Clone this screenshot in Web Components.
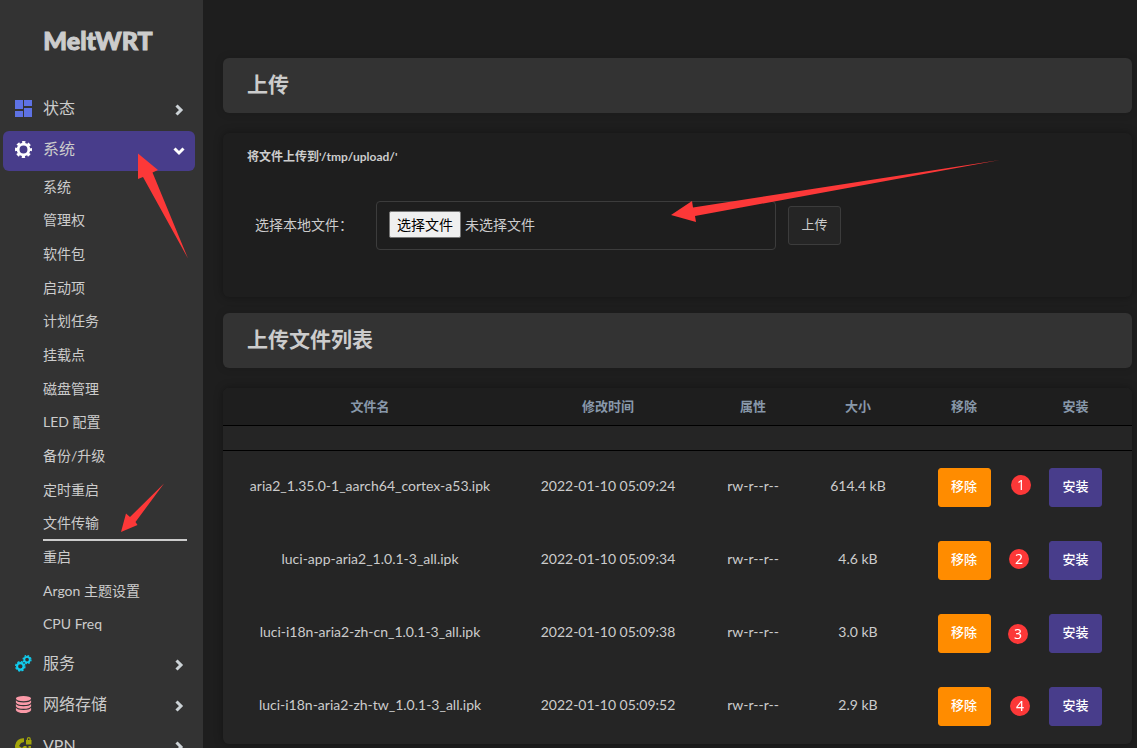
<!DOCTYPE html>
<html lang="zh-CN">
<head>
<meta charset="utf-8">
<title>MeltWRT</title>
<style>
body { margin: 0; background: #1e1e1e; color: #ccc; font: 14px/20px Lato, "Noto Sans CJK SC", sans-serif; }
</style>
</head>
<body>
<wrt-app></wrt-app>
<script>
const define = (name, html, setup) => customElements.define(name, class extends HTMLElement {
  connectedCallback() {
    if (this.shadowRoot) return;
    this.attachShadow({ mode: 'open' }).innerHTML = html;
    if (setup) setup(this, this.shadowRoot);
  }
});

const icons = {
  status: '<svg viewBox="0 0 17 17" fill="#5e72e4"><path d="M0 0h8v9H0zM0 11h8v6H0zM9 0h8v6H9zM9 8h8v9H9z"/></svg>',
  system: '<svg viewBox="0 0 24 24" fill="none" stroke="#fff"><circle cx="12" cy="12" r="7.6" stroke-width="4"/><circle cx="12" cy="12" r="10.4" stroke-width="3.2" stroke-dasharray="4.6 3.568" stroke-dashoffset="2.3"/></svg>',
  service: '<svg viewBox="0 0 24 24" fill="none" stroke="#11cdef"><circle cx="7.5" cy="16" r="4.6" stroke-width="3"/><circle cx="7.5" cy="16" r="6.5" stroke-width="2" stroke-dasharray="3 2.105"/><circle cx="17" cy="6.5" r="3.9" stroke-width="2.6"/><circle cx="17" cy="6.5" r="5.6" stroke-width="1.8" stroke-dasharray="2.4 2"/></svg>',
  storage: '<svg viewBox="0 0 16 17" fill="#fb9aa8"><ellipse cx="8" cy="2.6" rx="7.6" ry="2.6"/><path d="M.4 4.2Q2 6.4 8 6.4t7.6-2.2v2.2Q14 9 8 9T.4 6.400z"/><path d="M.4 8Q2 10.200 8 10.200T15.600 8v2.200Q14 12.800 8 12.800T.4 10.200z"/><path d="M.4 11.800Q2 14 8 14t7.600-2.200v2.400Q14 17 8 17T.4 14.200z"/></svg>',
  vpn: '<svg viewBox="0 0 17 17" fill="#a3a50a"><path d="M9 1.200A8 8 0 1 0 16 9h-2.500v2l-2-.5V9H9L7 11 4 9 6 6l3-1z"/><path d="M11 3h.8V2a2 2 0 0 1 4 0v1h.7v4.500H11zm2 0h1.500V2a.75.75 0 0 0-1.500 0z"/></svg>'
};

define('menu-item', `
<style>
:host { display: block; }
a { display: flex; align-items: center; height: 40px; margin: 0 8px 0 3px; padding: 0 10px 0 12px; border-radius: 6px; color: #ccc; text-decoration: none; font-size: 16px; line-height: 24px; }
:host([open]) a { background: #483d8b; }
.icon { display: flex; width: 18px; margin-right: 10px; padding-bottom: 3px; }
.icon svg { width: 17px; height: 17px; }
.label { flex: 1; padding-bottom: 4px; }
.arrow { width: 12px; height: 12px; fill: none; stroke: #ccd2d6; stroke-width: 3; }
:host([open]) .arrow { transform: rotate(90deg); stroke: #fff; }
</style>
<a href="#"><span class="icon"></span><span class="label"><slot></slot></span><svg class="arrow" viewBox="0 0 12 12"><path d="M3.500 1.500 8 6l-4.500 4.500"/></svg></a>
<slot name="children"></slot>`,
(host, root) => { root.querySelector('.icon').innerHTML = icons[host.getAttribute('icon')]; });

define('sub-menu', `
<style>
:host { display: grid; grid-auto-rows: 1fr; height: 471px; margin: 0 16px 2px 43px; }
</style><slot></slot>`);

define('sub-item', `
<style>
:host { display: flex; }
a { flex: 1; display: flex; align-items: center; box-sizing: border-box; border-bottom: 2px solid transparent; color: #ccc; text-decoration: none; font-size: 14px; line-height: 20px; }
:host([active]) a { border-color: #ccc; }
</style><a href="#"><slot></slot></a>`);

define('side-bar', `
<style>
:host { display: block; box-sizing: border-box; width: 203px; flex: none; background: #333; overflow: hidden; }
.brand { display: flex; justify-content: center; align-items: center; height: 80px; padding: 0 7px 0 0; margin-bottom: 10px; color: #ccc; text-decoration: none; font-size: 25px; line-height: 32px; font-weight: 900; -webkit-text-stroke: 1px #ccc; }
nav { display: grid; gap: 1px; }
</style>
<a class="brand" href="#">MeltWRT</a>
<nav>
<menu-item icon="status">状态</menu-item>
<menu-item icon="system" open>系统
<sub-menu slot="children">
<sub-item>系统</sub-item><sub-item>管理权</sub-item><sub-item>软件包</sub-item><sub-item>启动项</sub-item><sub-item>计划任务</sub-item><sub-item>挂载点</sub-item><sub-item>磁盘管理</sub-item><sub-item>LED 配置</sub-item><sub-item>备份/升级</sub-item><sub-item>定时重启</sub-item><sub-item active>文件传输</sub-item><sub-item>重启</sub-item><sub-item>Argon 主题设置</sub-item><sub-item>CPU Freq</sub-item>
</sub-menu></menu-item>
<menu-item icon="service">服务</menu-item>
<menu-item icon="storage">网络存储</menu-item>
<menu-item icon="vpn">VPN</menu-item>
</nav>`);

define('section-title', `
<style>
:host { display: block; }
h2 { margin: 0; padding: 10px 24px 13px; background: #333; border-radius: 6px; font-size: 21px; line-height: 32px; font-weight: 700; box-shadow: 0 0 8px rgba(0,0,0,.15); }
</style><h2><slot></slot></h2>`);

define('wrt-button', `
<style>
:host { display: inline-block; vertical-align: middle; }
button { display: block; box-sizing: border-box; width: 53px; height: 39px; padding: 0 0 4px; border: 1px solid #3c3c3c; border-radius: 3px; background: #252525; color: #ccc; font: inherit; font-size: 13px; line-height: 20px; }
:host([kind=remove]) button { background: #ff8c00; border-color: #ff8c00; color: #fff; font-weight: 500; }
:host([kind=install]) button { background: #483d8b; border-color: #483d8b; color: #fff; font-weight: 500; }
</style><button type="button"><slot></slot></button>`);

define('upload-form', `
<style>
:host { display: block; box-sizing: border-box; padding: 14px 24px 47px; border-radius: 6px; background: #1e1e1e; box-shadow: 0 0 8px rgba(0,0,0,.35); }
p { margin: 0 0 34px; font-size: 12px; line-height: 20px; font-weight: 700; }
form { display: flex; align-items: center; padding-left: 8px; gap: 12px; }
form > label { width: 109px; padding-bottom: 2px; }
.file { position: relative; display: flex; align-items: center; gap: 4px; box-sizing: border-box; flex: 0 1 400px; height: 49px; padding: 0 12px 2px; border: 1px solid #3c3c3c; border-radius: 4px; }
.pick { padding: 2px 7px; border: 1px solid #767676; border-radius: 2px; background: #efefef; color: #000; line-height: 21px; }
input { position: absolute; inset: 0; width: 100%; height: 100%; opacity: 0; }
</style>
<p>将文件上传到'/tmp/upload/'</p>
<form><label for="file">选择本地文件：</label>
<div class="file"><span class="pick">选择文件</span><span>未选择文件</span><input id="file" type="file"></div>
<wrt-button>上传</wrt-button></form>`);

const files = [
  ['aria2_1.35.0-1_aarch64_cortex-a53.ipk', '2022-01-10 05:09:24', '614.4 kB'],
  ['luci-app-aria2_1.0.1-3_all.ipk', '2022-01-10 05:09:34', '4.6 kB'],
  ['luci-i18n-aria2-zh-cn_1.0.1-3_all.ipk', '2022-01-10 05:09:38', '3.0 kB'],
  ['luci-i18n-aria2-zh-tw_1.0.1-3_all.ipk', '2022-01-10 05:09:52', '2.9 kB']
];
define('file-table', `
<style>
:host { display: block; padding-bottom: 1px; border-radius: 6px; overflow: hidden; background: #252525; box-shadow: 0 0 8px rgba(0,0,0,.35); }
table { width: 100%; table-layout: fixed; border-collapse: separate; border-spacing: 0; text-align: center; }
th, td { box-sizing: border-box; }
th { height: 38px; padding: 0 0 2px; background: #1e1e1e; color: #8898aa; font-size: 13px; line-height: 20px; font-weight: 700; border-bottom: 1px solid #000; }
td { height: 73px; padding: 0 0 3px; }
td.action { padding: 0; }
.spacer td { height: 25px; padding: 0; border-bottom: 1px solid #000; }
</style>
<table>
<colgroup><col style="width:294px"><col style="width:182px"><col style="width:108px"><col style="width:102px"><col style="width:110px"><col style="width:113px"></colgroup>
<thead><tr><th>文件名</th><th>修改时间</th><th>属性</th><th>大小</th><th>移除</th><th>安装</th></tr></thead>
<tbody><tr class="spacer"><td colspan="6"></td></tr>
${files.map(f => `<tr><td>${f[0]}</td><td>${f[1]}</td><td>rw-r--r--</td><td>${f[2]}</td><td class="action"><wrt-button kind="remove">移除</wrt-button></td><td class="action"><wrt-button kind="install">安装</wrt-button></td></tr>`).join('')}
</tbody></table>`);

define('guide-marks', `
<style>
:host { position: absolute; inset: 0; overflow: hidden; pointer-events: none; }
svg { position: absolute; left: 0; top: 0; width: 1137px; height: 748px; fill: #fc3838; }
span { position: absolute; width: 20px; height: 20px; border-radius: 50%; background: #fc3838; color: #fff; font: 14px/20px "Noto Sans", sans-serif; text-align: center; }
</style>
<svg viewBox="0 0 1137 748"><path d="M138 153.500 158 170 152.500 172.500 188 258.500 143 177 138 179z"/><path d="M671 215 692 201 693 207.500 1000 160 695 216 696 222z"/><path d="M121 532 126 513.500 130 517 164 483.500 135.500 522 137.500 525z"/></svg>
<span style="left:1011px;top:475px">1</span><span style="left:1009px;top:549px">2</span><span style="left:1008px;top:624px">3</span><span style="left:1010px;top:696px">4</span>`);

define('wrt-app', `
<style>
:host { position: relative; display: flex; height: 100vh; overflow: hidden; }
main { flex: 1; min-width: 0; padding: 58px 5px 0 20px; }
section-title { margin-bottom: 20px; }
upload-form { margin-bottom: 16px; }
</style>
<side-bar></side-bar>
<main>
<section-title>上传</section-title>
<upload-form></upload-form>
<section-title>上传文件列表</section-title>
<file-table></file-table>
</main>
<guide-marks></guide-marks>`);
</script>
</body>
</html>
